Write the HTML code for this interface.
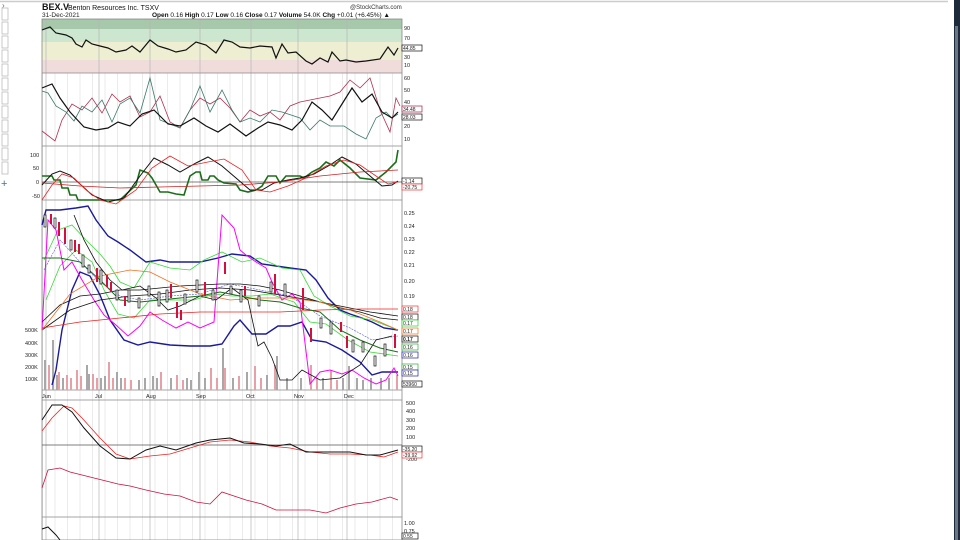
<!DOCTYPE html>
<html><head><meta charset="utf-8"><style>
html,body{margin:0;padding:0;background:#fff;width:960px;height:540px;overflow:hidden;font-family:"Liberation Sans",sans-serif}
svg{position:absolute;left:0;top:0}
text{font-family:"Liberation Sans",sans-serif}
</style></head><body>
<svg width="960" height="540" viewBox="0 0 960 540">
<defs>
<pattern id="g" x="42" y="0" width="12.5" height="540" patternUnits="userSpaceOnUse"><line x1="0.5" y1="0" x2="0.5" y2="540" stroke="#e6e6e6" stroke-width="0.8"/></pattern>
</defs>
<line x1="0" y1="1.5" x2="948" y2="1.5" stroke="#ccc" stroke-width="1.5"/>
<rect x="954" y="0" width="6" height="540" fill="#1c2a3a"/>
<rect x="955" y="26" width="3" height="514" fill="#6b7686"/>
<g fill="#fff" stroke="#bbb" stroke-width="0.8">
<rect x="2" y="8" width="6" height="12"/><rect x="2" y="22" width="6" height="12"/><rect x="2" y="36" width="6" height="12"/><rect x="2" y="50" width="6" height="12"/><rect x="2" y="64" width="6" height="12"/><rect x="2" y="78" width="6" height="12"/><rect x="2" y="92" width="6" height="12"/><rect x="2" y="106" width="6" height="12"/><rect x="2" y="120" width="6" height="12"/><rect x="2" y="134" width="6" height="12"/><rect x="2" y="148" width="6" height="12"/><rect x="2" y="162" width="6" height="12"/>
</g>
<text x="2" y="8" font-size="8" fill="#4a7090">›</text>
<text x="1" y="187" font-size="11" fill="#4a7090">+</text>
<text x="42" y="10" font-size="9" font-weight="bold" fill="#111">BEX.V</text>
<text x="68" y="10" font-size="7" fill="#111">Benton Resources Inc.  TSXV</text>
<text x="350" y="9" font-size="6" fill="#333">@StockCharts.com</text>
<text x="42" y="17" font-size="6.5" fill="#222">31-Dec-2021</text>
<text x="152" y="17" font-size="6.5" fill="#111"><tspan font-weight="bold">Open</tspan> 0.16 <tspan font-weight="bold">High</tspan> 0.17 <tspan font-weight="bold">Low</tspan> 0.16 <tspan font-weight="bold">Close</tspan> 0.17 <tspan font-weight="bold">Volume</tspan> 54.0K <tspan font-weight="bold">Chg</tspan> +0.01 (+6.45%) ▲</text>
<rect x="42" y="19" width="360" height="10" fill="#a8c8ac"/>
<rect x="42" y="29" width="360" height="13" fill="#cde6cf"/>
<rect x="42" y="42" width="360" height="18" fill="#eeeed3"/>
<rect x="42" y="60" width="360" height="13" fill="#f1dcdc"/>
<rect x="42" y="73" width="360" height="327" fill="url(#g)"/>
<rect x="42" y="400" width="360" height="140" fill="url(#g)"/>
<g stroke="#b5b5b5" stroke-width="0.7">
<line x1="46" y1="19" x2="46" y2="540"/><line x1="99" y1="19" x2="99" y2="540"/><line x1="150" y1="19" x2="150" y2="540"/><line x1="200" y1="19" x2="200" y2="540"/><line x1="251" y1="19" x2="251" y2="540"/><line x1="298" y1="19" x2="298" y2="540"/><line x1="347" y1="19" x2="347" y2="540"/>
</g>
<g stroke="#888" stroke-width="0.8" fill="none">
<rect x="42" y="19" width="360" height="521"/>
<line x1="42" y1="73" x2="402" y2="73"/><line x1="42" y1="146" x2="402" y2="146"/><line x1="42" y1="200" x2="402" y2="200"/><line x1="42" y1="390" x2="402" y2="390"/><line x1="42" y1="400" x2="402" y2="400"/><line x1="42" y1="517" x2="402" y2="517"/>
</g>
<polyline fill="none" stroke="#111" stroke-width="1.2" points="42,30 50,27 56,33 66,35 72,38 76,44 82,47 86,40 92,44 100,46 108,48 116,52 126,50 132,46 140,52 150,40 158,46 168,49 176,52 186,50 196,42 206,45 216,53 224,40 232,42 240,47 250,48 260,46 272,47 276,58 282,44 288,53 296,52 306,61 312,64 320,58 328,62 332,52 340,61 346,60 356,62 366,61 380,59 388,47 394,55 398,48"/>
<polyline fill="none" stroke="#b03050" stroke-width="0.8" points="42,131 55,141 62,120 72,104 82,110 92,98 102,113 112,94 120,102 130,96 140,117 150,112 160,96 170,122 180,128 190,110 200,98 210,104 220,98 230,108 240,122 250,110 260,116 270,112 280,120 290,106 300,102 310,100 320,98 330,96 340,92 350,80 360,88 370,78 380,110 390,132 396,98 400,106"/>
<polyline fill="none" stroke="#3b7a6a" stroke-width="0.8" points="42,91 48,93 56,106 66,112 74,121 82,106 92,112 102,100 112,122 120,104 130,98 140,113 150,78 160,120 170,124 180,128 190,110 200,86 210,112 222,90 232,110 240,122 250,118 260,122 272,110 282,112 300,118 310,130 320,120 330,126 344,126 356,134 366,139 376,118 386,112 392,118 398,114"/>
<polyline fill="none" stroke="#111" stroke-width="1.2" points="42,88 52,84 60,98 70,112 84,127 96,130 108,128 118,122 130,126 142,114 154,110 168,124 180,126 194,118 206,126 218,132 230,124 246,136 258,128 268,122 280,125 292,130 302,120 312,102 322,110 332,120 342,104 352,88 362,102 372,94 382,112 392,118 398,112"/>
<line x1="42" y1="182" x2="402" y2="182" stroke="#555" stroke-width="0.8"/>
<polyline fill="none" stroke="#1a6e1a" stroke-width="1.6" points="42,176 52,176 54,180 60,180 62,188 68,188 70,195 76,195 78,200 100,200 120,200 136,185 140,170 148,173 152,178 156,185 160,192 168,192 176,194 184,195 190,176 196,172 200,172 202,180 208,180 210,176 214,176 218,180 224,183 236,184 240,190 248,192 256,190 262,186 268,176 276,176 280,183 286,176 300,176 304,178 312,172 320,168 326,162 334,166 340,160 350,168 360,178 376,180 386,172 396,162 398,150"/>
<polyline fill="none" stroke="#111" stroke-width="1" points="42,185 52,174 60,171 70,175 80,184 92,195 108,202 124,198 140,176 154,158 168,165 180,172 196,163 208,157 222,166 236,178 250,190 262,190 274,183 288,180 300,178 314,174 330,165 342,157 356,164 370,176 382,186 392,185 398,181"/>
<polyline fill="none" stroke="#e22" stroke-width="0.8" points="42,200 52,185 62,174 74,178 86,190 100,200 116,204 136,190 152,168 170,156 188,166 208,162 224,159 242,170 256,190 270,192 288,186 306,178 326,166 344,160 360,165 376,176 388,184 398,182"/>
<polyline fill="none" stroke="#c22" stroke-width="0.8" points="42,183 80,186 120,188 160,187 200,186 240,185 280,182 320,176 360,172 398,170"/>
<!-- volume -->
<g fill="#e8a0a8"><rect x="48" y="365" width="2" height="25"/><rect x="58" y="372" width="2" height="18"/><rect x="66" y="375" width="2" height="15"/><rect x="70" y="378" width="2" height="12"/><rect x="76" y="370" width="2" height="20"/><rect x="80" y="376" width="2" height="14"/><rect x="92" y="374" width="2" height="16"/><rect x="96" y="378" width="2" height="12"/><rect x="108" y="362" width="2" height="28"/><rect x="112" y="378" width="2" height="12"/><rect x="124" y="378" width="2" height="12"/><rect x="130" y="380" width="2" height="10"/><rect x="160" y="372" width="2" height="18"/><rect x="176" y="375" width="2" height="15"/><rect x="182" y="380" width="2" height="10"/><rect x="210" y="368" width="2" height="22"/><rect x="216" y="378" width="2" height="12"/><rect x="224" y="368" width="2" height="22"/><rect x="238" y="376" width="2" height="14"/><rect x="254" y="366" width="2" height="24"/><rect x="260" y="378" width="2" height="12"/><rect x="274" y="365" width="2" height="25"/><rect x="310" y="365" width="2" height="25"/><rect x="316" y="378" width="2" height="12"/><rect x="330" y="370" width="2" height="20"/><rect x="336" y="380" width="2" height="10"/><rect x="396" y="375" width="2" height="15"/></g>
<g fill="#a8a8a8"><rect x="44" y="360" width="2" height="30"/><rect x="52" y="340" width="2" height="50"/><rect x="56" y="375" width="2" height="15"/><rect x="62" y="378" width="2" height="12"/><rect x="86" y="365" width="2" height="25"/><rect x="88" y="374" width="2" height="16"/><rect x="100" y="378" width="2" height="12"/><rect x="104" y="376" width="2" height="14"/><rect x="116" y="372" width="2" height="18"/><rect x="120" y="378" width="2" height="12"/><rect x="138" y="380" width="2" height="10"/><rect x="144" y="378" width="2" height="12"/><rect x="152" y="376" width="2" height="14"/><rect x="156" y="378" width="2" height="12"/><rect x="170" y="378" width="2" height="12"/><rect x="186" y="378" width="2" height="12"/><rect x="190" y="380" width="2" height="10"/><rect x="198" y="372" width="2" height="18"/><rect x="204" y="378" width="2" height="12"/><rect x="222" y="348" width="2" height="42"/><rect x="232" y="378" width="2" height="12"/><rect x="246" y="372" width="2" height="18"/><rect x="266" y="375" width="2" height="15"/><rect x="276" y="356" width="2" height="34"/><rect x="286" y="378" width="2" height="12"/><rect x="300" y="378" width="2" height="12"/><rect x="322" y="378" width="2" height="12"/><rect x="342" y="378" width="2" height="12"/><rect x="348" y="366" width="2" height="24"/><rect x="356" y="378" width="2" height="12"/><rect x="362" y="380" width="2" height="10"/><rect x="370" y="378" width="2" height="12"/><rect x="380" y="378" width="2" height="12"/><rect x="388" y="378" width="2" height="12"/></g>
<polyline fill="none" stroke="#1b1b9a" stroke-width="1.4" points="42,225 46,210 60,210 76,208 88,206 96,220 108,236 118,242 130,250 146,262 160,260 170,262 190,262 200,262 218,258 232,254 250,256 262,264 276,266 290,268 306,270 316,280 328,298 340,310 350,314 362,318 372,322 384,328 398,330"/>
<polyline fill="none" stroke="#1b1b9a" stroke-width="1.4" points="52,385 56,370 62,330 72,290 80,272 90,276 100,295 110,320 124,340 138,345 150,342 170,345 190,346 210,346 222,344 234,326 240,320 252,334 266,334 278,326 290,326 302,322 312,340 326,342 342,350 360,362 372,375 382,372 398,372"/>
<polyline fill="none" stroke="#3ada3a" stroke-width="0.8" points="44,260 58,230 72,225 86,240 100,254 110,266 120,282 134,288 150,262 170,268 190,270 204,260 222,252 242,262 260,258 282,268 300,270 314,296 330,306 350,316 372,320 398,330"/>
<polyline fill="none" stroke="#3ada3a" stroke-width="0.8" points="46,300 60,266 76,250 92,262 104,290 118,314 134,318 150,300 170,300 194,300 214,294 232,296 252,296 270,294 294,302 310,322 326,324 348,340 370,352 398,356"/>
<polyline fill="none" stroke="#5a5ad0" stroke-width="0.6" stroke-dasharray="2,1" points="44,270 60,240 80,262 100,282 120,296 140,300 170,296 200,294 230,284 260,290 290,296 320,316 350,328 372,340 398,336"/>
<polyline fill="none" stroke="#f0f" stroke-width="1" points="42,330 48,220 56,230 64,270 72,262 82,280 94,300 104,315 116,325 128,336 140,326 150,312 162,320 176,328 188,322 200,328 214,322 222,215 234,228 240,250 246,255 256,262 266,268 272,282 282,300 292,294 300,302 310,384 320,372 330,370 342,374 352,370 364,378 376,384 386,380 394,368 398,376"/>
<polyline fill="none" stroke="#111" stroke-width="0.8" points="42,322 60,305 80,296 100,294 120,290 140,290 160,288 180,286 200,285 220,284 240,284 260,286 280,290 300,296 320,302 340,308 360,312 380,318 398,320"/>
<polyline fill="none" stroke="#111" stroke-width="0.8" points="42,330 70,310 100,300 130,296 160,294 190,290 220,288 250,290 280,295 310,300 340,306 370,312 398,316"/>
<polyline fill="none" stroke="#f07020" stroke-width="0.8" points="42,330 70,294 100,276 130,270 150,272 170,282 200,294 230,300 260,298 290,298 320,302 350,310 380,322 398,330"/>
<polyline fill="none" stroke="#e22" stroke-width="0.8" points="42,328 80,322 120,318 160,314 200,312 240,312 280,312 320,310 360,309 398,309"/>
<polyline fill="none" stroke="#111" stroke-width="0.8" points="74,215 84,240 96,262 110,280 122,290 140,286 156,298 168,310 180,306 200,296 216,300 232,288 248,300 258,346 264,342 272,358 280,380 292,380 302,370 320,380 340,378 360,365 376,340 392,336"/>
<polyline fill="none" stroke="#1a6e1a" stroke-width="1" points="42,258 60,258 80,262 100,280 120,300 140,302 160,300 180,298 200,296 220,292 240,296 260,300 280,302 300,308 320,312 340,330 360,340 380,348 398,352"/>
<g stroke="#111" stroke-width="0.7" fill="#fff"><rect x="44" y="215" width="2" height="12"/><rect x="54" y="218" width="2" height="10"/><rect x="70" y="240" width="2" height="10"/><rect x="82" y="255" width="2" height="12"/><rect x="88" y="265" width="2" height="8"/><rect x="100" y="270" width="2" height="14"/><rect x="116" y="290" width="2" height="10"/><rect x="128" y="290" width="2" height="12"/><rect x="138" y="298" width="2" height="10"/><rect x="148" y="286" width="2" height="10"/><rect x="158" y="292" width="2" height="14"/><rect x="166" y="290" width="2" height="12"/><rect x="184" y="294" width="2" height="10"/><rect x="196" y="280" width="2" height="12"/><rect x="212" y="290" width="2" height="10"/><rect x="230" y="286" width="2" height="8"/><rect x="240" y="290" width="2" height="12"/><rect x="258" y="296" width="2" height="10"/><rect x="270" y="282" width="2" height="10"/><rect x="284" y="284" width="2" height="12"/><rect x="320" y="318" width="2" height="10"/><rect x="330" y="322" width="2" height="12"/><rect x="352" y="340" width="2" height="12"/><rect x="362" y="342" width="2" height="10"/><rect x="374" y="356" width="2" height="10"/><rect x="384" y="344" width="2" height="12"/></g>
<g fill="#d01040"><rect x="50" y="214" width="2" height="10"/><rect x="58" y="222" width="2" height="14"/><rect x="64" y="228" width="2" height="16"/><rect x="74" y="240" width="2" height="12"/><rect x="78" y="244" width="2" height="10"/><rect x="96" y="268" width="2" height="14"/><rect x="106" y="275" width="2" height="12"/><rect x="110" y="282" width="2" height="10"/><rect x="124" y="296" width="2" height="10"/><rect x="170" y="284" width="2" height="14"/><rect x="176" y="302" width="2" height="16"/><rect x="180" y="310" width="2" height="10"/><rect x="204" y="282" width="2" height="14"/><rect x="224" y="262" width="2" height="12"/><rect x="244" y="286" width="2" height="10"/><rect x="274" y="274" width="2" height="20"/><rect x="302" y="288" width="2" height="22"/><rect x="310" y="328" width="2" height="14"/><rect x="340" y="322" width="2" height="10"/><rect x="346" y="336" width="2" height="12"/><rect x="394" y="334" width="2" height="14"/></g>
<line x1="42" y1="445" x2="402" y2="445" stroke="#555" stroke-width="0.8"/>
<polyline fill="none" stroke="#e22" stroke-width="0.8" points="42,431 52,418 64,406 72,408 82,418 100,438 116,454 130,459 150,456 170,454 190,448 210,442 230,440 250,442 270,446 290,448 310,452 330,454 350,454 370,455 384,457 398,452"/>
<polyline fill="none" stroke="#111" stroke-width="1" points="42,420 52,405 62,405 72,412 84,428 100,446 116,458 130,459 146,450 160,446 176,450 196,443 210,440 230,438 244,443 260,444 276,446 290,444 306,452 320,452 334,452 350,452 366,455 380,455 398,450"/>
<polyline fill="none" stroke="#d01040" stroke-width="0.8" points="42,488 48,470 60,468 70,472 86,476 102,480 118,484 130,486 146,490 164,494 180,496 196,502 210,504 222,492 234,496 246,500 262,504 276,510 296,510 310,510 326,513 340,508 356,504 372,502 390,497 398,500"/>
<polyline fill="none" stroke="#111" stroke-width="1" points="42,529 48,527 56,535 60,540 M128,540 134,535 142,532 150,540 M196,540 200,527 206,526 212,533 216,540 M244,540 250,530 258,530 262,540 M270,540 272,536 274,540 M334,540 336,531 340,540 M346,540 350,530 356,530 360,540 M388,540 392,533 398,536"/>
<g font-size="5.5" fill="#222">
<text x="404" y="30">90</text><text x="404" y="40">70</text><text x="404" y="59">30</text><text x="404" y="67">10</text>
<text x="404" y="80">60</text><text x="404" y="92">50</text><text x="404" y="104">40</text><text x="404" y="128">20</text><text x="404" y="141">10</text>
<text x="30" y="157">100</text><text x="33" y="170">50</text><text x="36" y="184">0</text><text x="32" y="198">-50</text>
<text x="404" y="215">0.25</text><text x="404" y="228">0.24</text><text x="404" y="241">0.23</text><text x="404" y="254">0.22</text><text x="404" y="267">0.21</text><text x="404" y="283">0.20</text><text x="404" y="298">0.19</text>
<text x="25" y="332">500K</text><text x="25" y="345">400K</text><text x="25" y="357">300K</text><text x="25" y="369">200K</text><text x="25" y="381">100K</text>
<text x="42" y="398">Jun</text><text x="95" y="398">Jul</text><text x="146" y="398">Aug</text><text x="196" y="398">Sep</text><text x="246" y="398">Oct</text><text x="294" y="398">Nov</text><text x="344" y="398">Dec</text>
<text x="406" y="405">500</text><text x="406" y="413">400</text><text x="406" y="422">300</text><text x="406" y="430">200</text><text x="406" y="439">100</text><text x="406" y="461">-200</text>
<text x="404" y="525">1.00</text><text x="404" y="533">0.75</text>
</g>
<g font-size="5.5" stroke-width="0.7" fill="#fff">
<rect x="402" y="45" width="20" height="6" stroke="#111"/><rect x="402" y="106" width="20" height="6" stroke="#a02040"/><rect x="402" y="114" width="20" height="6" stroke="#111"/>
<rect x="402" y="178" width="20" height="6" stroke="#111"/><rect x="402" y="184" width="20" height="6" stroke="#e33"/>
<rect x="402" y="306" width="16" height="6" stroke="#e33"/><rect x="402" y="314" width="16" height="6" stroke="#111"/><rect x="402" y="320" width="16" height="6" stroke="#3c3"/><rect x="402" y="328" width="16" height="6" stroke="#f07020"/><rect x="402" y="336" width="16" height="6" stroke="#111"/><rect x="402" y="344" width="16" height="6" stroke="#3a3"/><rect x="402" y="352" width="16" height="6" stroke="#22a"/><rect x="402" y="364" width="16" height="6" stroke="#3a3"/><rect x="402" y="370" width="16" height="6" stroke="#22a"/><rect x="402" y="381" width="20" height="6" stroke="#111"/>
<rect x="402" y="446" width="20" height="6" stroke="#111"/><rect x="402" y="452" width="20" height="6" stroke="#e33"/><rect x="402" y="533" width="16" height="6" stroke="#111"/>
</g>
<g font-size="5" fill="#222">
<text x="403" y="50">44.85</text><text x="403" y="111">34.48</text><text x="403" y="119">28.03</text><text x="403" y="183">-1.14</text><text x="403" y="189">-20.75</text>
<text x="403" y="311">0.18</text><text x="403" y="319">0.18</text><text x="403" y="325">0.17</text><text x="403" y="333">0.17</text><text x="403" y="341" font-weight="bold">0.17</text><text x="403" y="349">0.16</text><text x="403" y="357">0.16</text><text x="403" y="369">0.15</text><text x="403" y="375">0.15</text><text x="403" y="386">53960</text>
<text x="403" y="451">-35.20</text><text x="403" y="457">-39.92</text><text x="403" y="538">0.55</text>
</g>
</svg>
</body></html>
